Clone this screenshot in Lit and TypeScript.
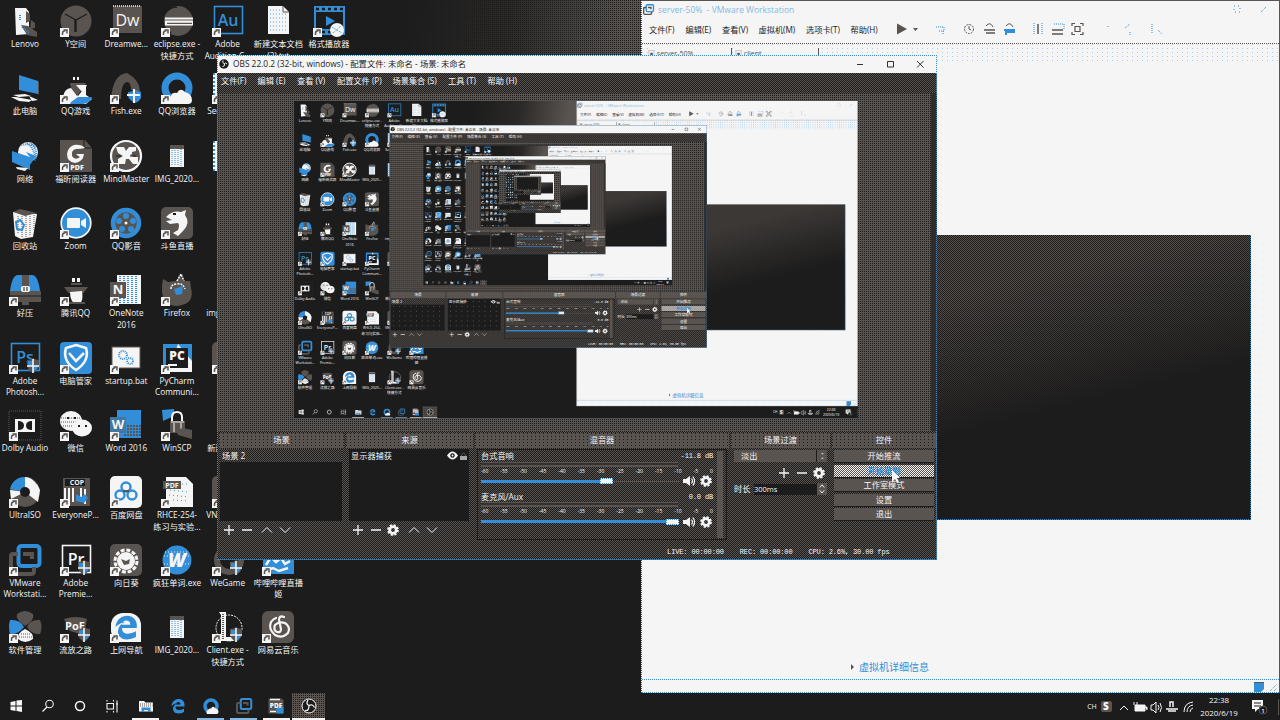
import { LitElement, html, svg, css, nothing } from "lit";
import { customElement, property } from "lit/decorators.js";

const D = "#1c1c1c", G = "#5a5450", W = "#f5f5f5", B = "#328ed8";
const PREVIEW_SCALE = 564 / 1280;
const MAX_LEVEL = 4;

const label = (t: string, x: number, y: number, size: number, fill: string, weight = 700) =>
  svg`<text x=${x} y=${y} font-size=${size} font-weight=${weight} fill=${fill} text-anchor="middle" font-family="Open Sans, sans-serif">${t}</text>`;
const shield = svg`<path d="M18 18q4 0 6-2 3 2 6 2v6q-1 4-6 7-5-3-6-7z" fill=${G}/><path d="M19 19h5v5h-5zM24 24h5q-1 4-5 6z" fill=${B}/><path d="M24 17v14M18 24h12" stroke=${W} stroke-width="1.6"/>`;
const frame = (t: string, c: string) => svg`<rect x="2.5" y="1.5" width="28" height="27" fill=${D} stroke=${c} stroke-width="1.6"/>${label(t, 16, 21, 16, c, 600)}`;
const vm = svg`<rect x="9.500" y="2" width="21" height="20" rx="3" fill="none" stroke=${B} stroke-width="4"/><path d="M9 10H4q-2 0-2 2v15q0 3 3 3h17q3 0 3-3v-4M14 10h9v5" fill="none" stroke=${G} stroke-width="4"/>`;
const photo = svg`<rect x="9" y="5" width="14" height="22" fill=${W}/><path d="M9 5h14v4H9z" fill=${G}/><path d="M11 10v15M14 8v17M17 10v15M20 9v17" stroke=${B} stroke-width="1" stroke-dasharray="1 1"/>`;
const qqb = svg`<circle cx="16" cy="16" r="12" fill="none" stroke=${B} stroke-width="7"/><path d="M8 32q-3-6 2-8 1-4 6-3 3-6 8-1 7 2 7 8 0 4-4 4z" fill=${W}/>`;
const eLogo = (c: string) => svg`<path d="M3 16C4 6 11 2 17 2c9 0 13 7 12 15H11q0 7 7 7 5 0 10-3v7q-5 3-11 3C8 31 4 24 7 17q2-5 8-7-6 0-12 6zm8-3h10q0-5-5-5-4 0-5 5z" fill=${c}/>`;

const glyphs: Record<string, unknown> = {
  lenovo: svg`<path d="M6 3h11l3 4v22l-13 1z" fill=${W}/><path d="M17 6l4 3v7l-4 2zM22 15l4 3v5l-5 1z" fill=${G}/><path d="M12 20l7 1 9 6v5l-10-2z" fill=${G}/><path d="M11 10v6M13 22l7 6" stroke=${B} stroke-dasharray="1 1" stroke-width="2"/>`,
  y: svg`<circle cx="16" cy="16" r="15.500" fill=${G}/><path d="M5 9l11 6 11-6M16 15v12M15 15v12" fill="none" stroke=${D} stroke-width="1.300"/>`,
  dw: svg`<rect x="3" y="1" width="29" height="27" fill=${G}/><path d="M3 1h28" stroke=${W} stroke-width="1.500" stroke-dasharray="1 1"/>${label("Dw", 17.5, 21, 16, W, 500)}`,
  eclipse: svg`<circle cx="17" cy="16" r="15" fill=${G}/><path d="M16 2a14 14 0 0 0-14 14 14 14 0 0 0 8 12" fill="none" stroke=${D} stroke-width="1.500"/><path d="M4 12.500h28v8H4z" fill=${W}/><path d="M4 15h28M6 18.300h25" stroke=${G} stroke-width="1.200"/>`,
  au: frame("Au", B), ps: frame("Ps", B), pr: svg`${frame("Pr", W)}${shield}`, pss: svg`${frame("Ps", B)}${shield}`,
  doc: svg`<path d="M6 1h15l6 6v22H6z" fill=${W}/><path d="M8 5h12M8 9h17M8 13h17M8 17h17M8 21h17M8 25h17" stroke=${B} stroke-dasharray="1 2" stroke-width=".8"/><path d="M21 1v6h6" fill="none" stroke=${G}/>`,
  film: svg`<rect x="1" y="1" width="31" height="29" fill=${B}/><rect x="3" y="7" width="27" height="17" fill=${D}/><path d="M3 4h27M3 27h27" stroke=${D} stroke-width="2.500" stroke-dasharray="3 3"/><path d="M13 11l9 5-9 5z" fill=${B}/><circle cx="24" cy="25" r="7" fill=${W}/><path d="M19 22l10 6M20 28l8-7" stroke=${B} stroke-dasharray="1 1"/>`,
  pc: svg`<path d="M10 3l19 6v13l-19-4z" fill=${B}/><path d="M29 9l1 1v13l-1-1z" fill=${G}/><path d="M4 23l12-1 6 2-12 1zM2 25l5 0 16 3-3 2-10-1zM20 24l9 4-6 1z" fill=${W}/>`,
  qqgame: svg`<circle cx="16" cy="6" r="5" fill=${D}/><path d="M13 5h2v3h-2zM17 5h2v3h-2z" fill=${W}/><path d="M3 28q0-12 9-12l6 8 8-10v9l6 4-6 5H4z" fill=${W}/><path d="M10 11l16 0-2 4-7 9-6-8z" fill=${G}/><path d="M16 13h11l-4 8z" fill=${W}/><path d="M11 30l7-5 14 0q-2 6-9 7H10z" fill=${B}/>`,
  fish: svg`<path d="M1 27Q3 2 17 1l6 4q7 6 7 16l-9-3q0-8-4-8-6 1-6 17z" fill=${G}/><path d="M18 20q5 0 6-3 4 3 7 3v6q-2 4-6 5-6-3-7-7z" fill=${B}/><path d="M24 17v14M17 23h13" stroke=${W} stroke-width="2"/>`,
  qqb,
  sec: svg`<rect x="1" y="1" width="30" height="30" fill=${W}/><path d="M2 1v30" stroke=${B} stroke-dasharray="2 2" stroke-width="2"/>`,
  net: svg`<circle cx="19" cy="12" r="10" fill=${W}/><path d="M12 5q10-2 14 2M18 3q8 5 8 18M22 3q6 4 5 16" stroke=${B} stroke-width="2" stroke-dasharray="1 1" fill="none"/><path d="M3 11l18 6v13L3 22z" fill=${B}/><path d="M17 12l4 5v8l6-9z" fill=${B}/><path d="M7 27l12 1-3 3-8-2z" fill=${W}/>`,
  foxit: svg`<path d="M0 0h25l7 8v24H0z" fill=${G}/><path d="M24 0v8h8" fill="none" stroke=${D}/><path d="M25 8Q21 4 14 5q-6 2-7 9 0 8 8 9 8-1 9-9h-8q2 2 4 3-5 4-8-1-1-6 4-7 5 0 9-1z" fill=${W}/>${label("PDF", 17, 30, 7, W, 800)}`,
  mind: svg`<circle cx="16" cy="16" r="15" fill=${G} stroke=${W} stroke-width="2.200"/><path d="M6 7h8l2 4 3-4h7v4l-4 1v2l-2 1 4 2h4v7h-5l-4-5h-3l-1 5H8v-5l5-3-5-3z" fill=${W}/><path d="M6 16h5M20 16h6" stroke=${D}/>`,
  photo,
  bin: svg`<path d="M4 5l24 2-4 23-12 2-6-3z" fill=${W}/><path d="M4 5l7-3 17 4-12 3z" fill=${G}/><path d="M9 9v18M13 9v22M17 9v22M21 9v20M25 8v16" stroke=${G} stroke-dasharray="1 1"/><path d="M7 15l4-2 4 5-2 5-5-1z" fill="none" stroke=${B} stroke-width="2"/>`,
  zoom: svg`<circle cx="16" cy="16" r="14.800" fill=${B} stroke=${W} stroke-width="1.700"/><rect x="7" y="11" width="13" height="10" rx="1" fill=${W}/><path d="M21 14l5-3v10l-5-3z" fill=${W}/>`,
  reel: svg`<circle cx="16" cy="16" r="13" fill=${G} stroke=${B} stroke-width="4.500"/><g fill=${B}><circle cx="16" cy="9" r="3"/><circle cx="9" cy="14" r="3"/><circle cx="23" cy="14" r="3"/><circle cx="12" cy="22" r="3"/><circle cx="21" cy="22" r="3"/></g><circle cx="16" cy="16" r="1.500" fill=${W}/>`,
  shark: svg`<rect width="32" height="32" rx="5" fill=${G}/><path d="M5 10q7-7 15-5l5-2-1 5q6 8-2 16l-5 5-5-3 5-3q2-5 0-7l-8 1-4-3 6-1z" fill=${W}/><path d="M12 7h3" stroke=${D} stroke-width="2"/>`,
  zip: svg`<path d="M1 17Q3 1 9 1h14q6 0 8 16z" fill=${B}/><path d="M1 17h31v11H1z" fill=${G}/><path d="M13 1h7v30h-7z" fill=${G}/><path d="M1 22h31" stroke=${D}/><rect x="12" y="12" width="9" height="6" rx="2" fill=${W}/><path d="M15 13v4M18 13v4" stroke=${D}/>`,
  qq: svg`<ellipse cx="16" cy="10" rx="7" ry="9" fill=${D}/><path d="M12 4h3v4h-3zM17 4h3v4h-3z" fill=${W}/><path d="M11 10h11M6 14h20l-3 4H9z" stroke=${G} stroke-width="2" fill=${G}/><path d="M10 18l12-1q2 13-5 13-7-1-7-12z" fill=${W}/><path d="M9 29h16" stroke=${G} stroke-width="2"/>`,
  onenote: svg`<path d="M7 1h24v29H7z" fill=${W}/><path d="M10 2v27M14 2v27M18 2v27M22 2v27M26 2v27" stroke=${B} stroke-width="2" stroke-dasharray="1 1"/><path d="M0 8h16v16H0z" fill=${G}/>${label("N", 8, 20, 13, W)}`,
  firefox: svg`<path d="M2 5l5 3 8-1 5-8 2 8 7 0 1 7q3 12-6 16-13 5-20-3-5-8-2-22z" fill=${G}/><path d="M16 7l4-7 3 7M10 15q0-5 6-5 6-1 8 5" fill="none" stroke=${W} stroke-dasharray="2 1" stroke-width="1.500"/><path d="M13 15l9-3-1 8-6 1z" fill=${B}/>`,
  guard: svg`<rect width="32" height="32" rx="4" fill=${B}/><path d="M16 3l10 3q4 13-10 22Q2 19 6 6z" fill="none" stroke=${W} stroke-width="2.600"/><path d="M9 11l7 8 8-8" fill="none" stroke=${W} stroke-width="2.600"/>`,
  bat: svg`<rect x="2" y="5" width="28" height="21" fill=${W} stroke=${G}/><circle cx="13" cy="13" r="4" fill="none" stroke=${B} stroke-dasharray="1 1" stroke-width="2"/><circle cx="20" cy="19" r="3" fill="none" stroke=${B} stroke-dasharray="1 1" stroke-width="2"/>`,
  pycharm: svg`<rect x="2" y="2" width="29" height="28" fill=${B}/><path d="M17 2l14 17v11H8z" fill=${W}/><rect x="5" y="6" width="22" height="20" fill=${D}/>${label("PC", 16, 18, 12, W, 800)}<path d="M7 23h9" stroke=${W} stroke-width="2"/>`,
  dolby: svg`<rect x="0" y="2" width="32" height="29" fill=${D} stroke=${G} stroke-dasharray="1 1"/><rect x="6" y="10" width="20" height="13" fill=${W}/><path d="M9 12q6 0 6 4.500T9 21zM23 12q-6 0-6 4.500t6 4.500z" fill=${D}/>`,
  wechat: svg`<ellipse cx="11" cy="12" rx="11" ry="10" fill=${W}/><path d="M1 9h20M1 13h20M3 17h16" stroke=${G} stroke-dasharray="1 1"/><ellipse cx="22" cy="19" rx="10" ry="8.500" fill=${W}/><path d="M7 9h2M14 9h2M18 17h2M25 17h2" stroke=${D} stroke-width="2"/>`,
  word: svg`<path d="M7 1h24v28H7z" fill=${B}/><path d="M14 17h17M14 20h17M14 23h17M14 26h17" stroke=${G} stroke-width="2" stroke-dasharray="2 1"/><path d="M0 8h16v16H0z" fill=${B}/><path d="M0 8h16v16H0z" fill=${G} opacity=".4"/>${label("W", 8, 20, 13, W)}`,
  winscp: svg`<path d="M1 1l12-1v7L2 12z" fill=${B}/><path d="M11 13V8q0-5 5-5t5 5v5" fill="none" stroke=${W} stroke-width="2"/><rect x="9" y="12" width="15" height="12" fill=${G}/><path d="M13 14v9M20 14v9M10 13h13" stroke=${W}/><path d="M15 21l7-2 9 2v9l-14-4z" fill=${G}/>`,
  disc: svg`<circle cx="16" cy="16" r="15" fill=${G}/><path d="M16 16V1A15 15 0 0 0 1 13z" fill=${B}/><path d="M16 16l-15-2 1 9zM16 16L28 8l3 6-2 12z" fill=${W}/><path d="M16 16V1q7 0 12 8z" fill=${W}/><circle cx="16" cy="16" r="5" fill=${D}/>`,
  everyone: svg`<rect x="3" y="2" width="27" height="28" fill=${G}/><rect x="5" y="3" width="20" height="7" fill=${D}/>${label("COP", 17, 9, 7, W)}<path d="M5 12v16M9 12v18M13 12v14M21 12v14M25 13v15" stroke=${W} stroke-width="2"/><path d="M16 18l5 3 4-3 3 4-4 5-8-2z" fill=${B}/>`,
  baidu: svg`<rect width="32" height="32" rx="5" fill=${W}/><g fill="none" stroke=${B} stroke-width="2.400"><circle cx="16" cy="11" r="4.500"/><circle cx="10" cy="19" r="4.500"/><circle cx="22" cy="19" r="4.500"/></g><path d="M13 15h6" stroke=${G} stroke-width="2"/>`,
  pdf: svg`<path d="M5 1h20l7 7v23H5z" fill=${W}/><path d="M9 14l18 2M8 19l20 2M12 24l15 1M21 8h6" stroke=${B} stroke-dasharray="1 3"/><rect x="2" y="5" width="18" height="8" fill=${G}/>${label("PDF", 11, 11.5, 7, W)}`,
  vm,
  sunflower: svg`<rect width="32" height="32" rx="5" fill=${G}/><circle cx="16" cy="17" r="11" fill="none" stroke=${W} stroke-width="3" stroke-dasharray="4 1.760"/><circle cx="16" cy="17" r="9" fill=${W}/><path d="M11 15l5 2 4-2-1 5-5 1z" fill=${G}/>`,
  wword: svg`<circle cx="16" cy="16" r="14.500" fill=${B}/><path d="M4 8h24M3 12h26M3 20h26" stroke=${W} stroke-dasharray="1 2"/><text x="16" y="23" font-size="19" font-style="italic" font-weight="800" fill=${W} text-anchor="middle" font-family="Open Sans, sans-serif">W</text>`,
  wegame: svg`<circle cx="17" cy="16" r="12" fill="none" stroke=${G} stroke-width="6"/>${shield}`,
  bili: svg`<rect x="1" y="2" width="31" height="28" fill=${B}/><path d="M4 21l5-8 5 5 5-4 4 6 5-3M6 26l5-2 6 3 9-3" fill="none" stroke=${W} stroke-width="2.500"/>`,
  clover: svg`<path d="M8 3q8-6 16 0 2 6-8 12Q6 8 8 3z" fill=${G}/><path d="M1 9q10-1 14 7-6 8-14 7-2-7 0-14z" fill=${B}/><path d="M31 9q-10-1-13 7 5 8 13 7 3-7 0-14z" fill=${G}/><path d="M16 18q9 4 8 10-8 6-15 0-1-6 7-10z" fill=${W}/><path d="M12 23h9M10 26h13" stroke=${G} stroke-dasharray="1 1"/>`,
  poe: svg`<path d="M4 8q12-4 23 0l-3 16-14-4z" fill=${G}/>${label("PoE", 15, 19, 11, W)}${shield}`,
  nav: svg`<rect x="1" y="2" width="30" height="29" rx="12" fill=${W}/><path d="M1 18h30v13H4z" fill=${W}/><g transform="translate(3 3) scale(.82)">${eLogo(B)}</g>`,
  client: svg`<circle cx="17" cy="17" r="13" fill=${D} stroke=${W} stroke-dasharray="2 1"/><path d="M7 1h7v25l8 0v4H5l4-4V4z" fill=${W}/><path d="M11 3v25" stroke=${G} stroke-dasharray="1 1" stroke-width="2"/>${shield}`,
  netease: svg`<rect width="32" height="32" rx="6" fill=${G}/><path d="M22 6q-5-2-5 3l2 9q0 4-4 3-4-2-2-7 4-4 10-2 6 4 3 10-6 6-13 2-7-6-4-13 2-3 5-4" fill="none" stroke=${W} stroke-width="2.200" stroke-linecap="round"/>`,
};

interface Item { icon: string; text: string; plain?: boolean }
const I = (icon: string, text: string, plain = false): Item => ({ icon, text, plain });
const items: (Item | null)[] = [
  I("lenovo", "Lenovo", true), I("pc", "此电脑", true), I("net", "网络", true), I("bin", "回收站", true), I("zip", "好压"), I("pss", "Adobe\nPhotosh..."), I("dolby", "Dolby Audio"), I("disc", "UltraISO"), I("vm", "VMware\nWorkstati..."), I("clover", "软件管理"),
  I("y", "Y空间"), I("qqgame", "QQ游戏"), I("foxit", "福昕阅读器"), I("zoom", "Zoom"), I("qq", "腾讯QQ"), I("guard", "电脑管家"), I("wechat", "微信"), I("everyone", "EveryoneP..."), I("pr", "Adobe\nPremie..."), I("poe", "流放之路"),
  I("dw", "Dreamwe..."), I("fish", "Fish.exe"), I("mind", "MindMaster"), I("reel", "QQ影音"), I("onenote", "OneNote\n2016"), I("bat", "startup.bat"), I("word", "Word 2016"), I("baidu", "百度网盘"), I("sunflower", "向日葵"), I("nav", "上网导航"),
  I("eclipse", "eclipse.exe -\n快捷方式"), I("qqb", "QQ浏览器"), I("photo", "IMG_2020...", true), I("shark", "斗鱼直播"), I("firefox", "Firefox"), I("pycharm", "PyCharm\nCommuni..."), I("winscp", "WinSCP"), I("pdf", "RHCE-254-\n练习与实验..."), I("wword", "疯狂单词.exe"), I("photo", "IMG_2020...", true),
  I("au", "Adobe\nAudition C..."), I("sec", "SecureCRT"), I("sec", "", true), null, I("photo", "img_2020...", true), I("shark", ""), I("photo", "新建文件夹", true), I("shark", "VNC View..."), I("wegame", "WeGame"), I("client", "Client.exe -\n快捷方式"),
  I("doc", "新建文本文档\n(2).txt", true), null, null, null, null, null, null, null, I("bili", "哔哩哔哩直播\n姬"), I("netease", "网易云音乐"),
  I("film", "格式播放器"),
];

const gear = html`<svg class="g12" viewBox="0 0 12 12"><circle cx="6" cy="6" r="3.300" fill="none" stroke=${W} stroke-width="2.800"/><circle cx="6" cy="6" r="5" fill="none" stroke=${W} stroke-width="1.800" stroke-dasharray="2.200 1.727"/></svg>`;
const plus = html`<svg class="g12" viewBox="0 0 12 12"><path d="M6 1v10M1 6h10" stroke=${W} stroke-width="1.300"/></svg>`;
const minus = html`<svg class="g12" viewBox="0 0 12 12"><path d="M1 6h10" stroke=${W} stroke-width="1.500"/></svg>`;
const up = html`<svg class="g12" viewBox="0 0 12 12"><path d="M1 8.500l5-5 5 5" fill="none" stroke=${W}/></svg>`;
const down = html`<svg class="g12" viewBox="0 0 12 12"><path d="M1 3.500l5 5 5-5" fill="none" stroke=${W}/></svg>`;
const speaker = html`<svg class="g12" viewBox="0 0 12 12"><path d="M0 4h3l4-3v10L3 8H0z" fill=${W}/><path d="M8.500 3.500q2 2.500 0 5M9.800 1.500q3.500 4.500 0 9" fill="none" stroke=${W} stroke-width="1.200"/></svg>`;

@customElement("desktop-scene")
export class DesktopScene extends LitElement {
  @property({ type: Number }) level = 0;

  static styles = css`
    :host { display: block; position: relative; width: 1280px; height: 720px; overflow: hidden; background: #1c1c1c; color: #f5f5f5;
      font: 8.2px/11px "Open Sans", "Noto Sans CJK SC", sans-serif; }
    * { box-sizing: border-box; }
    svg { display: block; overflow: visible; }
    .glow { position: absolute; left: 380px; top: 0; width: 261px; height: 60px;
      background: radial-gradient(circle at .5px .5px, #1c1c1c .8px, transparent 0) 0 0 / calc(2px * var(--k)) calc(2px * var(--k)), linear-gradient(100deg, #1c1c1c 10%, #2b2927 50%, #5a5450 92%); }
    .icons { display: grid; grid-auto-flow: column; grid-template-rows: repeat(10, 67.35px); grid-auto-columns: 50.67px; padding-top: 5px; margin-left: -.35px; position: relative; width: max-content; }
    .item { display: flex; flex-direction: column; align-items: center; }
    .pic { width: 32px; height: 32px; }
    .cap { white-space: pre; text-align: center; margin-top: 1px; line-height: 11.500px; }
    .win { position: absolute; }
    .vm { left: 641px; top: 0; width: 639px; height: 693px; background: #f5f5f5; color: #1c1c1c; border: solid #5a5450; border-width: 1px 1px 0 0; border-left: 1px dotted #5a5450; display: flex; flex-direction: column; }
    .vtitle { height: 16px; display: flex; align-items: center; gap: 4px; padding: 0 10px 0 1px; color: #85b9e4; }
    .vtitle .t { flex: 1; font-size: 8.500px; }
    .vtitle svg { width: 11px; height: 11px; }
    .vtitle .ctl { display: flex; width: 58px; height: 9px; }
    .vmenu { height: 27px; display: flex; align-items: center; padding: 0 0 2px 7px; border-bottom: 1px dotted #5a5450; }
    .vmenu span { width: 36.500px; white-space: nowrap; }
    .vmenu .w3 { width: 47.500px; } .vmenu .w4 { width: 44.500px; } .vmenu .w5 { width: 45px; }
    .vbar { width: 290px; height: 14px; }
    .tabs { height: 20px; display: flex; align-items: flex-start; gap: 3px; padding: 4px 0 0 6px; color: #85b9e4; background: radial-gradient(circle at .5px .5px, #a9cfee .7px, transparent 0) 0 0 / 5px 4px; }
    .tab { width: 84px; height: 12px; overflow: hidden; background: #f5f5f5; border-right: 1px solid #5a5450; color: #5a5450; font-size: 7px; line-height: 12px; white-space: nowrap; }
    .vbody { flex: 1; padding: 171px 28px 0 254px; display: flex; flex-direction: column; }
    .screen { height: 285px; border: dotted #328ed8; border-width: 0 1px 1px 0;
      background: repeating-conic-gradient(#1c1c1c 0 25%, transparent 0 50%) 0 0 / calc(2px * var(--k)) calc(2px * var(--k)), linear-gradient(166deg, #5a5450 0, #5a5450 20%, #332f2d 45%, #1c1c1c 58%); }
    .detail { margin-top: 141px; display: flex; gap: 5px; align-items: center; color: #328ed8; font-size: 10px; line-height: 12px; margin-left: -45px; }
    .detail i { border: solid transparent; border-width: 3px 0 3px 3px; border-left-color: #5a5450; }
    .vfoot { height: 14px; border: dotted #328ed8; border-width: 1px 0; display: flex; justify-content: flex-end; gap: 4px; padding: 2px 1px 0 0; }
    .vfoot svg { width: 10px; height: 10px; }
    .obs { left: 217px; top: 55px; width: 720px; height: 505px; display: flex; flex-direction: column; outline: 1px dotted #328ed8; outline-offset: -1px; }
    .chk { background: repeating-conic-gradient(#1c1c1c 0 25%, #5a5450 0 50%) 0 0 / calc(2px * var(--k)) calc(2px * var(--k)); }
    .otitle { height: 18px; flex: none; background: #f5f5f5; color: #1c1c1c; display: flex; align-items: center; gap: 4px; padding: 0 13px 1px 2px; }
    .otitle .t { flex: 1; font-size: 8.350px; white-space: nowrap; }
    .otitle svg { width: 10px; height: 10px; }
    .otitle .ctl { width: 67px; height: 8px; }
    .omenu { height: 20px; display: flex; padding: 2px 0 0 4px; white-space: pre; line-height: 11px; }
    .omenu span { flex: none; }
    .stage { height: 338px; flex: none; padding: 8px 0 0 77px; border-right: 6px solid #302d2b;
      background: conic-gradient(#1c1c1c 25%, #5a5450 0) 0 0 / calc(2px * var(--k)) calc(2px * var(--k)); }
    .preview { width: 564px; height: 317.250px; overflow: hidden; background: #1c1c1c; }
    .preview desktop-scene { transform: scale(.440625); transform-origin: 0 0; }
    .docks { flex: 1; display: flex; gap: 2px; padding: 2px 1px 0 2px; }
    .dock { display: flex; flex-direction: column; flex: none; }
    .d1 { width: 125px; } .d2 { width: 127px; } .d3 { width: 254px; } .d4 { width: 99px; } .d5 { width: 104px; }
    .head { height: 15px; text-align: center; line-height: 14px; background: radial-gradient(circle at .5px .5px, #1c1c1c .7px, transparent 0) 0 0 / calc(4px * var(--k)) calc(3px * var(--k)) #5a5450; }
    .list { height: 72px; margin: 1px 2px 0 1px; background: radial-gradient(circle at 1px 1px, #5a5450 .7px, transparent 0) 5px 5px / 13px 11px #1c1c1c; }
    .d2 .list { margin: 1px 4px 0 3px; }
    .row { height: 13px; display: flex; align-items: center; padding: 0 2px 0; }
    .row .n { flex: 1; }
    .eye { width: 11px; height: 9px; margin-right: 2px; }
    .lock { width: 7px; height: 8px; }
    .tools { display: flex; align-items: center; height: 18px; padding: 0 4px; gap: 5.700px; }
    .d2 .tools { padding-left: 6px; }
    .gap { width: 3px; margin-left: -5.700px; }
    .g12 { width: 12px; height: 12px; flex: none; }
    .mix { height: 91px; margin: 1px 2px 0 2px; border: 1px solid #1c1c1c; display: flex; padding: 1px 3px 1px 3px; gap: 4px; }
    .chs { flex: 1; }
    .ch { height: 40.500px; }
    .mono { font-family: "Liberation Mono", "Noto Sans CJK SC", monospace; font-size: 7px; letter-spacing: -.15px; white-space: pre; }
    .line { display: flex; justify-content: space-between; height: 10.500px; line-height: 10px; }
    .meter { height: 5px; width: 197px; border: solid #5a5450; border-width: 1px 0 2px; background: #35312f; }
    .ticks { display: flex; justify-content: space-between; height: 9px; font: 5px/9px "Open Sans", sans-serif; }
    .ctlrow { display: flex; align-items: center; height: 11px; gap: 5px; padding-right: 1.500px; }
    .slider { flex: 1; height: 3px; display: flex; align-items: center; background: linear-gradient(#5a5450, #5a5450) 0 1px / 100% 1px no-repeat; margin-right: -2px; }
    .fill { height: 3px; background: #328ed8; flex: none; }
    .knob { width: 13px; height: 6px; flex: none; background: #f5f5f5; border: 1px dotted #328ed8; }
    .sb { width: 6px; background: #5a5450; }
    .trans { padding: 2px 3px 0 3px; }
    .combo { display: flex; height: 12px; background: #5a5450; padding-left: 7px; justify-content: space-between; line-height: 12px; }
    .arr { width: 11px; border-left: 1px solid #1c1c1c; background: #5a5450; }
    .tr2 { display: flex; justify-content: flex-end; gap: 5.500px; padding: 5px 2px 4px 0; }
    .tr3 { display: flex; height: 12px; line-height: 12px; align-items: center; }
    .tr3 .k { width: 20px; } .tr3 .v { flex: 1; background: #1c1c1c; height: 11px; line-height: 11px; font-size: 7.500px; }
    .btns { padding: 2px 2px 0; display: flex; flex-direction: column; gap: 1.500px; }
    .btn { height: 13px; line-height: 12px; text-align: center; background: #5a5450; border-bottom: .5px solid #1c1c1c; }
    .hot { background: repeating-conic-gradient(#f5f5f5 0 25%, #5a5450 0 50%) 0 0 / calc(2px * var(--k)) calc(2px * var(--k)); color: #328ed8; font-weight: 700; }
    .status { height: 17px; display: flex; justify-content: flex-end; gap: 16px; padding: 4px 47.500px 0 0; }
    .cursor { position: absolute; left: 892px; top: 470px; width: 9px; height: 14px; }
    .task { position: absolute; left: 0; right: 0; bottom: 0; height: 27px; background: #1c1c1c; display: flex; align-items: stretch; }
    .tb { width: 32.600px; flex: none; display: flex; align-items: center; justify-content: center; border-bottom: 2px solid transparent; }
    .tb svg { width: 16px; height: 16px; }
    .run { background: linear-gradient(#f5f5f5, #f5f5f5) 50% 100% / 27px 2px no-repeat border-box; }
    .runb { background: linear-gradient(#85b9e4, #85b9e4) 50% 100% / 27px 2px no-repeat border-box; }
    .on { background: conic-gradient(#1c1c1c 25%, #5a5450 0) 0 0 / calc(2px * var(--k)) calc(2px * var(--k)); border-bottom-color: #f5f5f5; }
    .s { width: 32px; }
    .s + .run { margin-left: 1.500px; }
    .tray { margin-left: auto; display: flex; align-items: center; }
    .tray svg { width: 120px; height: 16px; }
    .clock { text-align: center; width: 46px; line-height: 13px; font-size: 7.900px; margin-left: -2px; }
    .note { width: 37px; display: flex; justify-content: flex-start; padding-left: 9px; border-right: 1px solid #5a5450; margin-right: 1px; }
    .note svg { width: 16px; height: 16px; }
  `;

  private item(it: Item | null) {
    if (!it) return html`<div class="item"></div>`;
    return html`<div class="item"><svg class="pic" viewBox="0 0 32 32">${glyphs[it.icon]}${it.plain ? nothing : svg`<rect x="0" y="23" width="9" height="9" fill=${W}/><path d="M2.500 30v-2q0-2 3-2.500M3.500 25h3.500v3.500" fill="none" stroke=${G} stroke-width="1.500"/>`}</svg><div class="cap">${it.text}</div></div>`;
  }

  private channel(name: string, db: string, w: number) {
    return html`<div class="ch">
      <div class="line"><span>${name}</span><span class="mono">${db}</span></div>
      <div class="meter"></div>
      <div class="ticks">${[-60, -55, -50, -45, -40, -35, -30, -25, -20, -15, -10, -5, 0].map((n) => html`<span>${n}</span>`)}</div>
      <div class="ctlrow"><div class="slider"><div class="fill" style="width:${w}px"></div><div class="knob"></div></div>${speaker}${gear}</div>
    </div>`;
  }

  private vmWindow() {
    return html`<section class="win vm">
      <div class="vtitle"><svg viewBox="0 0 32 32">${vm}</svg><span class="t">server-50% &nbsp;- VMware Workstation</span>
        <svg class="ctl" viewBox="0 0 58 9"><path d="M23 1h6v6h-6z" fill="none" stroke=${B} stroke-dasharray="1 3"/><path d="M50 7l5-5" stroke=${B} stroke-dasharray="1 1"/></svg></div>
      <div class="vmenu"><span>文件(F)</span><span>编辑(E)</span><span>查看(V)</span><span class="w3">虚拟机(M)</span><span class="w4">选项卡(T)</span><span class="w5">帮助(H)</span>
        <svg class="vbar" viewBox="0 0 290 14"><path d="M1 1.500l10 5.500-10 5.500z" fill=${G}/><path d="M17 6h5l-2.500 3z" fill=${G}/>
          <g fill="none" stroke=${B} stroke-dasharray="1 1"><path d="M40 5h8v4h-6M47 9v4M138 1v12M146 1v12M158 2h10v5M212 5v-2M229 6l5-4M234 10v3M256 2v10M262 8l4 4"/></g>
          <circle cx="73" cy="7" r="4.500" fill="none" stroke=${G} stroke-dasharray="2 1"/><path d="M73 4v3l2 1M90 4q4-5 7 1M110 4q4-5 7 1" fill="none" stroke=${G}/><path d="M88 8h11M90 11h9M142 2v10M156 8h11M156 12h11" stroke=${G} stroke-width="1.500"/><path d="M108 8h10v2h-8v3" fill="none" stroke=${B} stroke-width="2"/>
          <path d="M176 4V1.500h3M184 1.500h3V4M187 10v2.500h-3M179 12.500h-3V10M179 4.500h5v5h-5z" fill="none" stroke=${G} stroke-width="1.200"/></svg></div>
      <div class="tabs"><div class="tab">▣ server-50%</div><div class="tab">▣ client</div></div>
      <div class="vbody"><div class="screen"></div><div class="detail"><i></i><span>虚拟机详细信息</span></div></div>
      <div class="vfoot"><svg viewBox="0 0 10 10"><path d="M0 0h10v7l-3 3H0z" fill=${B}/><path d="M0 .5h10" stroke=${G}/></svg><svg viewBox="0 0 10 10"><path d="M2 9l7-7M6 9l3-3" stroke=${B} stroke-dasharray="1 1"/></svg></div>
    </section>`;
  }

  private obsWindow() {
    const menu: [string, number][] = [["文件(F)", 36.5], ["编辑 (E)", 39.5], ["查看 (V)", 40], ["配置文件 (P)", 55.5], ["场景集合 (S)", 55.5], ["工具 (T)", 39.5], ["帮助 (H)", 40]];
    return html`<section class="win obs chk">
      <div class="otitle"><svg viewBox="0 0 20 20"><circle cx="10" cy="10" r="9.500" fill=${D}/><path d="M8 3q-2 5 2 6M16 10q-3-4-6 0M7 15q5 0 4-5" stroke=${W} fill="none" stroke-width="2"/></svg>
        <span class="t">OBS 22.0.2 (32-bit, windows) - 配置文件: 未命名 - 场景: 未命名</span>
        <svg class="ctl" viewBox="0 0 67 8"><path d="M0 4.500h6M30.500 1.500h6v5.500h-6zM60 1l6.500 6.500M66.500 1l-6.500 6.500" fill="none" stroke=${D} stroke-width=".9"/></svg></div>
      <div class="omenu">${menu.map(([t, w]) => html`<span style="width:${w}px">${t}</span>`)}</div>
      <div class="stage"><div class="preview">${this.level < MAX_LEVEL ? html`<desktop-scene .level=${this.level + 1}></desktop-scene>` : nothing}</div></div>
      <div class="docks">
        <div class="dock d1"><div class="head">场景</div><div class="list"><div class="row chk">场景 2</div></div><div class="tools">${plus}${minus}<i class="gap"></i>${up}${down}</div></div>
        <div class="dock d2"><div class="head">来源</div><div class="list"><div class="row"><span class="n">显示器捕获</span>
          <svg class="eye" viewBox="0 0 11 9"><path d="M0 4.500q5.500-8 11 0-5.500 8-11 0z" fill=${W}/><circle cx="5.500" cy="4.500" r="2.200" fill=${D}/><circle cx="5.500" cy="4.500" r="1" fill=${W}/></svg>
          <svg class="lock" viewBox="0 0 7 8"><path d="M1.500 4V2.500q2-3 4 0V4" fill="none" stroke=${G}/><path d="M0 4h7v4H0z" fill=${W} opacity=".65"/></svg></div></div>
          <div class="tools">${plus}${minus}${gear}<i class="gap"></i>${up}${down}</div></div>
        <div class="dock d3"><div class="head">混音器</div><div class="mix"><div class="chs">${this.channel("台式音响", "-11.8 dB", 119)}${this.channel("麦克风/Aux", "0.0 dB", 185)}</div><div class="sb"></div></div></div>
        <div class="dock d4"><div class="head">场景过渡</div><div class="trans"><div class="combo"><span>淡出</span><svg class="arr" viewBox="0 0 11 13"><path d="M5 4h2M5 9h2" stroke=${W}/></svg></div>
          <div class="tr2">${plus}${minus}${gear}</div>
          <div class="tr3"><span class="k">时长</span><span class="v">300ms</span><svg class="arr" viewBox="0 0 11 13"><path d="M3 5l2.500-3L8 5M3 8l2.500 3L8 8" fill="none" stroke=${W}/></svg></div></div></div>
        <div class="dock d5"><div class="head">控件</div><div class="btns">${["开始推流", "开始录制", "工作室模式", "设置", "退出"].map((t, i) => html`<div class="btn ${i === 1 ? "hot" : ""}">${t}</div>`)}</div></div>
      </div>
      <div class="status mono"><span>LIVE: 00:00:00</span><span>REC: 00:00:00</span><span>CPU: 2.6%, 30.00 fps</span></div>
    </section>`;
  }

  private taskbar() {
    const t = (cls: string, g: unknown, box = "0 0 32 32") => html`<div class="tb ${cls}"><svg viewBox=${box}>${g}</svg></div>`;
    return html`<footer class="task">
      ${t("s", svg`<path d="M5 8l10-2v9H5zM17 5l11-1v11H17zM5 17h10v9L5 24zM17 17h11v11l-11-2z" fill=${W}/>`)}
      ${t("s", svg`<circle cx="19" cy="12" r="7.500" fill="none" stroke=${W} stroke-width="2.200"/><path d="M14 18L5 27" stroke=${W} stroke-width="2.500"/>`)}
      ${t("s", svg`<circle cx="16" cy="16" r="9" fill="none" stroke=${W} stroke-width="3"/>`)}
      ${t("s", svg`<path d="M6 11h13v11H6zM6 7V4M19 7V4M6 26v3M19 26v3M26 5v24M24 12h4" fill="none" stroke=${W} stroke-width="2.200"/>`)}
      ${t("run", svg`<path d="M2 6h10l3 3h15v18H2z" fill=${W}/><path d="M4 12h25M4 16h25" stroke=${G} stroke-width="2" stroke-dasharray="2 2"/><path d="M7 19h18v9h-5v-4h-8v4H7z" fill=${B}/>`)}
      ${t("", eLogo(B))}${t("runb", qqb)}${t("runb", vm)}
      ${t("run", svg`<path d="M1 1h26l4 4v26H1z" fill=${G}/><path d="M4 3h20M4 27h12" stroke=${W} stroke-width="3"/><path d="M17 17h14v14H17z" fill=${B}/>${label("PDF", 16, 20, 13, W, 800)}`)}
      ${t("on", svg`<circle cx="16" cy="16" r="14" fill=${D} stroke=${W} stroke-width="2"/><path d="M14 4q-5 8 2 11M27 19q-4-8-11-4M8 25q8 2 8-10" stroke=${W} fill="none" stroke-width="2.500"/>`)}
      <div class="tray"><svg viewBox="0 0 120 16">${label("CH", 14, 10, 7, W, 400)}
          <rect x="23" y="2" width="11" height="11" rx="2" fill=${G}/>${label("S", 28, 11, 10, W, 800)}
          <path d="M42 11l4-4 4 4" fill="none" stroke=${W}/><path d="M57 6h10v6H57zM56 3v3M59 3v3M67 8h2v3" fill=${W} stroke=${W}/>
          <path d="M73 6h2l3-3v11l-3-3h-2zM80 6q2 2.500 0 5M82 4q3 4.500 0 9" fill="none" stroke=${W}/>
          <path d="M92 8V3h3v5M88 10h12M90 12h8" stroke=${W} fill="none" stroke-width="1.500"/>
          <path d="M106 13q0-9 9-10M109 13q0-6 6-7M112 13q0-3 3-4" fill="none" stroke=${W}/></svg>
        <div class="clock">22:38<br>2020/6/19</div>
        <div class="note"><svg viewBox="0 0 16 16"><path d="M1 1h11v9H7l-3 3v-3H1z" fill=${W}/><path d="M3 4h7M3 7h7" stroke=${D}/><circle cx="12" cy="11" r="4" fill=${D} stroke=${G}/>${label("1", 12, 13.5, 6, W, 600)}</svg></div></div>
    </footer>`;
  }

  render() {
    const k = 1 / Math.pow(PREVIEW_SCALE, this.level);
    return html`<style>:host { --k: ${k}; }</style>
      <div class="glow"></div>
      <div class="icons">${items.map((i) => this.item(i))}</div>
      ${this.vmWindow()}${this.obsWindow()}
      <svg class="cursor" viewBox="0 0 9 14"><path d="M0 0l8 8H5l2 4-2 1-2-4-3 3z" fill=${W}/></svg>
      ${this.taskbar()}`;
  }
}

@customElement("app-root")
export class AppRoot extends LitElement {
  static styles = css`:host { display: block; width: 1280px; height: 720px; overflow: hidden; }`;
  render() { return html`<desktop-scene></desktop-scene>`; }
}
